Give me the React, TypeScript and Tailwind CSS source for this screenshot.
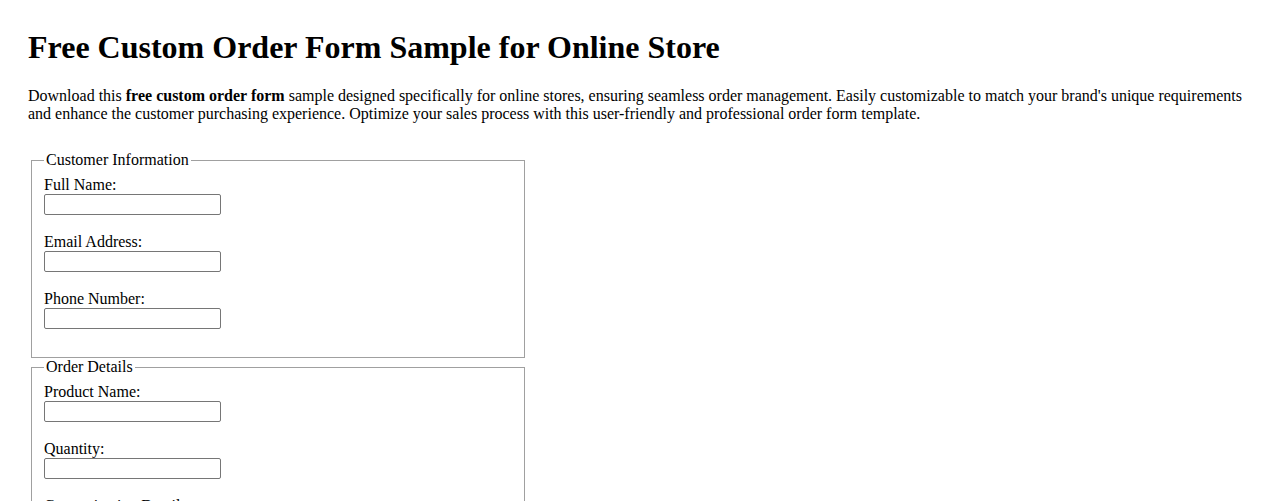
import React from "react";

type Field = {
    id: string;
    label: string;
    type?: string;
};

const customerFields: Field[] = [
    { id: "fullName", label: "Full Name:" },
    { id: "email", label: "Email Address:", type: "email" },
    { id: "phone", label: "Phone Number:", type: "tel" },
];

const orderFields: Field[] = [
    { id: "productName", label: "Product Name:" },
    { id: "quantity", label: "Quantity:", type: "number" },
    { id: "customization", label: "Customization Details:" },
];

const FormSection: React.FC<{ title: string; fields: Field[] }> = ({ title, fields }) => {
    return (
        <fieldset className="ml-[3px] w-[494px] border border-[#a0a0a0] px-3 pt-[7px] pb-[10px]">
            <legend className="px-[2px] leading-[18px]">{title}</legend>
            {fields.map((f) => (
                <div key={f.id} className="mb-[18px]">
                    <label htmlFor={f.id} className="block leading-[18px]">
                        {f.label}
                    </label>
                    <input
                        id={f.id}
                        name={f.id}
                        type={f.type ?? "text"}
                        className="block w-[177px] h-[21px] border border-[#767676] rounded-[2px] bg-white px-[2px] text-[13px] font-['Liberation_Sans',sans-serif] outline-none"
                    />
                </div>
            ))}
        </fieldset>
    );
};

const App: React.FC = () => {
    return (
        <div className="min-h-screen bg-white px-[28px] pt-[29px] pb-8 font-['Liberation_Serif',serif] text-[16px] text-black">
            <h1 className="text-[32px] font-bold leading-[37px]">
                Free Custom Order Form Sample for Online Store
            </h1>
            <p className="mt-[21px] leading-[18px]">
                Download this <strong className="font-bold">free custom order form</strong> sample designed
                specifically for online stores, ensuring seamless order management. Easily customizable to
                match your brand's unique requirements and enhance the customer purchasing experience.
                Optimize your sales process with this user-friendly and professional order form template.
            </p>
            <form className="mt-[28px] flex flex-col">
                <FormSection title="Customer Information" fields={customerFields} />
                <FormSection title="Order Details" fields={orderFields} />
            </form>
        </div>
    );
};

export default App;
